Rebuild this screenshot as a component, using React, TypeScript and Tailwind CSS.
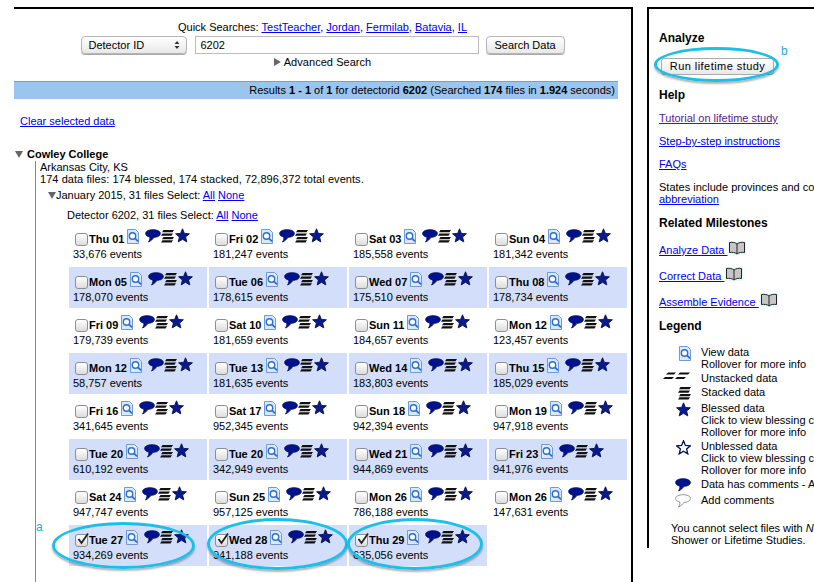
import type { ReactNode } from "react";

type Day = { label: string; events: string; checked?: boolean };

const weeks: Day[][] = [
  [
    { label: "Thu 01", events: "33,676" },
    { label: "Fri 02", events: "181,247" },
    { label: "Sat 03", events: "185,558" },
    { label: "Sun 04", events: "181,342" },
  ],
  [
    { label: "Mon 05", events: "178,070" },
    { label: "Tue 06", events: "178,615" },
    { label: "Wed 07", events: "175,510" },
    { label: "Thu 08", events: "178,734" },
  ],
  [
    { label: "Fri 09", events: "179,739" },
    { label: "Sat 10", events: "181,659" },
    { label: "Sun 11", events: "184,657" },
    { label: "Mon 12", events: "123,457" },
  ],
  [
    { label: "Mon 12", events: "58,757" },
    { label: "Tue 13", events: "181,635" },
    { label: "Wed 14", events: "183,803" },
    { label: "Thu 15", events: "185,029" },
  ],
  [
    { label: "Fri 16", events: "341,645" },
    { label: "Sat 17", events: "952,345" },
    { label: "Sun 18", events: "942,394" },
    { label: "Mon 19", events: "947,918" },
  ],
  [
    { label: "Tue 20", events: "610,192" },
    { label: "Tue 20", events: "342,949" },
    { label: "Wed 21", events: "944,869" },
    { label: "Fri 23", events: "941,976" },
  ],
  [
    { label: "Sat 24", events: "947,747" },
    { label: "Sun 25", events: "957,125" },
    { label: "Mon 26", events: "786,188" },
    { label: "Mon 26", events: "147,631" },
  ],
  [
    { label: "Tue 27", events: "934,269", checked: true },
    { label: "Wed 28", events: "941,188", checked: true },
    { label: "Thu 29", events: "635,056", checked: true },
  ],
];

function DocIcon() {
  return (
    <svg width="12" height="15" viewBox="0 0 12 15" className="shrink-0">
      <path d="M.5.500h8l3 3v11H.5z" fill="#dbe8fb" stroke="#6f9ad2" />
      <circle cx="5.500" cy="7" r="3.200" fill="#fff" stroke="#2a6fd0" strokeWidth="1.400" />
      <path d="M8 9.400l3 3" stroke="#2a6fd0" strokeWidth="1.800" />
    </svg>
  );
}

function BubbleIcon({ empty }: { empty?: boolean }) {
  return (
    <svg width="16" height="14" viewBox="0 0 16 14" className="shrink-0">
      <path
        d="M8 .7c4 0 7.400 1.400 7.400 3.800S12.400 8.300 9 8.300C8 10 6 12 3.500 13c1-1.500 1.500-3 1.300-5C2 7.500.6 6 .6 4.500.6 2.100 4 .7 8 .7z"
        fill={empty ? "#fff" : "#00128c"}
        stroke={empty ? "#777" : "#000b5c"}
        strokeWidth="0.800"
      />
    </svg>
  );
}

function StackIcon() {
  return (
    <svg width="13" height="14" viewBox="0 0 13 14" className="shrink-0">
      <path d="M2.500 1H13l-1.500 2.200H1zM1.500 4.500H12l-1.500 2.200H0zM2.500 8H13l-1.500 2.200H1zM1.500 11.300H12l-1.500 2.200H0z" fill="#111" />
    </svg>
  );
}

function UnstackedIcon() {
  return (
    <svg width="28" height="8" viewBox="0 0 28 8">
      <path d="M5 .5h8L11 2.500H3zM17 .5h10L25 2.500H15zM2 5h9L9 7H0zM14 5h9l-2 2h-9z" fill="#111" />
    </svg>
  );
}

function StarIcon({ empty }: { empty?: boolean }) {
  return (
    <svg width="15" height="15" viewBox="0 0 15 15" className="shrink-0">
      <path
        d="M7.500.8l1.900 4.600 5 .4-3.800 3.200 1.200 4.900-4.300-2.600-4.300 2.600 1.200-4.900L.6 5.800l5-.4z"
        fill={empty ? "#fff" : "#0a1a8c"}
        stroke="#05104f"
        strokeWidth={empty ? "1.300" : "0.900"}
      />
    </svg>
  );
}

function BookIcon() {
  return (
    <svg width="18" height="14" viewBox="0 0 18 14" className="shrink-0">
      <rect width="18" height="14" fill="#e4fbfb" />
      <path
        d="M9 3C7.500 1.500 4 1 1.500 1.500v10C4 11 7.500 11.500 9 13c1.500-1.500 5-2 7.500-1.500v-10C14 1 10.500 1.500 9 3zM9 3v10"
        fill="#c6c6c6"
        stroke="#222"
      />
    </svg>
  );
}

function Checkbox({ checked }: { checked?: boolean }) {
  return (
    <span className="relative h-[13px] w-[13px] shrink-0 rounded-[3px] border border-[#8e8e8e] bg-gradient-to-b from-white to-[#dcdcdc]">
      {checked && (
        <svg width="15" height="15" viewBox="0 0 15 15" className="absolute -top-[3px] left-0">
          <path d="M2.500 7l3 4L12 1.500" fill="none" stroke="#222" strokeWidth="1.800" />
        </svg>
      )}
    </span>
  );
}

function DayCell({ day, shaded }: { day: Day; shaded: boolean }) {
  return (
    <div className={`h-[41px] pl-[4px] pt-[7px] ${shaded ? "bg-[#d2defa]" : ""}`}>
      <div className="flex h-[16px] items-center pl-[2px]">
        <Checkbox checked={day.checked} />
        <span className="ml-[1px] text-[11px] font-bold">{day.label}</span>
        <span className="-mt-[6px] ml-[3px] flex items-start">
          <DocIcon />
          <span className="ml-[6px] flex items-start">
            <BubbleIcon />
            <StackIcon />
            <span className="-mt-[1px] ml-[1px]">
              <StarIcon />
            </span>
          </span>
        </span>
      </div>
      <div className="text-[11px] leading-[14px]">{day.events} events</div>
    </div>
  );
}

function Triangle({ down }: { down?: boolean }) {
  return (
    <span
      className={
        down
          ? "inline-block h-0 w-0 border-x-[4px] border-t-[7px] border-x-transparent border-t-[#666]"
          : "inline-block h-0 w-0 border-y-[4px] border-l-[7px] border-y-transparent border-l-[#666]"
      }
    />
  );
}

function A({ children, visited }: { children: ReactNode; visited?: boolean }) {
  return <a className={`underline ${visited ? "text-[#551a8b]" : "text-[#0000ee]"}`}>{children}</a>;
}

function LegendRow({ icon, children }: { icon: ReactNode; children: ReactNode }) {
  return (
    <div className="flex items-start">
      <div className="ml-[3px] flex w-[29px] shrink-0 justify-end">{icon}</div>
      <div className="ml-[10px] whitespace-nowrap leading-[12px]">{children}</div>
    </div>
  );
}

export default function App() {
  return (
    <div className="relative flex h-[582px] w-[814px] items-start overflow-hidden bg-white pl-[14px] pt-[7px] font-['Liberation_Sans',Arial,sans-serif] text-[11px] text-black">
      <main className="h-[575px] w-[619px] shrink-0 border-r-[2px] border-t-[2px] border-black">
        <div className="pt-[11px] text-center text-[11px] leading-[14px]">
          Quick Searches: <A>TestTeacher</A>, <A>Jordan</A>, <A>Fermilab</A>, <A>Batavia</A>, <A>IL</A>
        </div>

        <div className="mt-[2px] flex items-center justify-center">
          <div className="flex h-[18px] w-[106px] items-center justify-between rounded-[4px] border border-[#b5b5b5] bg-gradient-to-b from-white to-[#e8e8e8] pl-[7px] pr-[6px] text-[11px] shadow-[0_1px_0_#aaa]">
            Detector ID
            <svg width="6" height="10" viewBox="0 0 6 10">
              <path d="M3 1l2.500 3h-5zM3 9l2.500-3h-5z" fill="#333" />
            </svg>
          </div>
          <div className="ml-[8px] flex h-[18px] w-[284px] items-center border border-[#bbb] pl-[5px] text-[11px]">6202</div>
          <div className="ml-[7px] flex h-[18px] w-[79px] items-center justify-center rounded-[4px] border border-[#b5b5b5] bg-gradient-to-b from-white to-[#e8e8e8] text-[11px] shadow-[0_1px_0_#aaa]">
            Search Data
          </div>
        </div>

        <div className="mt-[1px] flex items-center justify-center gap-[3px] leading-[14px] tracking-[0.05px]">
          <Triangle />
          Advanced Search
        </div>

        <div className="mt-[12px] h-[18px] w-[604px] border-t border-[#6ea3d8] bg-[#9cc5ee] pr-[3px] text-right text-[11px] leading-[17px]">
          Results <b>1 - 1</b> of <b>1</b> for detectorid <b>6202</b> (Searched <b>174</b> files in <b>1.924</b> seconds)
        </div>

        <div className="ml-[6px] mt-[15px] leading-[14px]">
          <A>Clear selected data</A>
        </div>

        <div className="mt-[20px] flex h-[13px] items-center gap-[4px]">
          <span className="ml-[1px]">
            <Triangle down />
          </span>
          <b className="text-[11px]">Cowley College</b>
        </div>

        <div className="ml-[21px] h-[429px] border-l border-[#888] pl-[4px] leading-[12px]">
          <div>Arkansas City, KS</div>
          <div className="tracking-[0.06px]">174 data files: 174 blessed, 174 stacked, 72,896,372 total events.</div>

          <div className="ml-[8px] mt-[3px] flex items-center leading-[14px]">
            <Triangle down />
            <span>
              January 2015, 31 files Select: <A>All</A> <A>None</A>
            </span>
          </div>

          <div className="ml-[27px] mt-[6px] leading-[14px]">
            Detector 6202, 31 files Select: <A>All</A> <A>None</A>
          </div>

          <div className="mt-[2px] pl-[29px]">
            <div className="grid grid-cols-[repeat(4,138px)] gap-[2px]">
              {weeks.map((week, w) =>
                week.map((day, d) => <DayCell key={`${w}-${d}`} day={day} shaded={w % 2 === 1} />),
              )}
            </div>
          </div>
        </div>
      </main>

      <aside className="ml-[14px] h-[541px] w-[200px] shrink-0 overflow-hidden border-l-[2px] border-t-[2px] border-black pl-[10px]">
        <h2 className="mt-[22px] text-[12px] font-bold leading-[14px]">Analyze</h2>
        <div className="ml-[2px] mt-[13px] flex h-[17px] w-[113px] items-center justify-center rounded-[3px] border border-[#aaa] bg-gradient-to-b from-white to-[#e8e8e8] text-[11px] tracking-[0.45px]">
          Run lifetime study
        </div>
        <h2 className="mt-[13px] text-[12px] font-bold leading-[14px]">Help</h2>
        <p className="mt-[10px] leading-[13px]">
          <A visited>Tutorial on lifetime study</A>
        </p>
        <p className="mt-[10px] leading-[13px]">
          <A>Step-by-step instructions</A>
        </p>
        <p className="mt-[10px] leading-[13px]">
          <A>FAQs</A>
        </p>
        <p className="mt-[10px] whitespace-nowrap leading-[12px]">
          States include provinces and countries.
          <br />
          <A>abbreviation</A>
        </p>
        <h2 className="mt-[11px] text-[12px] font-bold leading-[14px]">Related Milestones</h2>
        <p className="mt-[13px] flex h-[14px] items-center gap-[1px]">
          <A>Analyze Data&nbsp;</A>
          <span className="-mt-[4px]"><BookIcon /></span>
        </p>
        <p className="mt-[12px] flex h-[14px] items-center gap-[1px]">
          <A>Correct Data&nbsp;</A>
          <span className="-mt-[4px]"><BookIcon /></span>
        </p>
        <p className="mt-[12px] flex h-[14px] items-center gap-[1px]">
          <A>Assemble Evidence&nbsp;</A>
          <span className="-mt-[4px]"><BookIcon /></span>
        </p>
        <h2 className="mt-[10px] text-[12px] font-bold leading-[14px]">Legend</h2>

        <div className="mt-[13px] flex flex-col">
          <LegendRow icon={<DocIcon />}>
            View data
            <br />
            Rollover for more info
          </LegendRow>
          <div className="mt-[2px]">
            <LegendRow icon={<UnstackedIcon />}>Unstacked data</LegendRow>
          </div>
          <div className="mt-[2px]">
            <LegendRow icon={<StackIcon />}>Stacked data</LegendRow>
          </div>
          <div className="mt-[2px]">
            <LegendRow icon={<StarIcon />}>
              Blessed data
              <br />
              Click to view blessing charts
              <br />
              Rollover for more info
            </LegendRow>
          </div>
          <div className="mt-[2px]">
            <LegendRow icon={<StarIcon empty />}>
              Unblessed data
              <br />
              Click to view blessing charts
              <br />
              Rollover for more info
            </LegendRow>
          </div>
          <div className="mt-[2px]">
            <LegendRow icon={<BubbleIcon />}>Data has comments - Add</LegendRow>
          </div>
          <div className="mt-[2px]">
            <LegendRow icon={<BubbleIcon empty />}>Add comments</LegendRow>
          </div>
        </div>

        <p className="ml-[12px] mt-[14px] whitespace-nowrap leading-[12px]">
          You cannot select files with <i>No</i>
          <br />
          Shower or Lifetime Studies.
        </p>
      </aside>

      {/* annotation callouts drawn over the page */}
      <span className="absolute left-[36px] top-[520px] text-[12px] leading-[14px] text-[#28a8d8]">a</span>
      <span className="absolute left-[781px] top-[44px] text-[12px] leading-[14px] text-[#28a8d8]">b</span>
      <div className="absolute left-[52px] top-[522px] h-[47px] w-[143px] rounded-[50%] border-[3px] border-[#1cbfe9] shadow-[0_2px_2px_rgba(0,0,0,0.3)]" />
      <div className="absolute left-[207px] top-[518px] h-[52px] w-[141px] rounded-[50%] border-[3px] border-[#1cbfe9] shadow-[0_2px_2px_rgba(0,0,0,0.3)]" />
      <div className="absolute left-[347px] top-[518px] h-[52px] w-[136px] rounded-[50%] border-[3px] border-[#1cbfe9] shadow-[0_2px_2px_rgba(0,0,0,0.3)]" />
      <div className="absolute left-[654px] top-[47px] h-[35px] w-[125px] rounded-[50%] border-[3px] border-[#1cbfe9] shadow-[0_2px_2px_rgba(0,0,0,0.3)]" />
    </div>
  );
}
